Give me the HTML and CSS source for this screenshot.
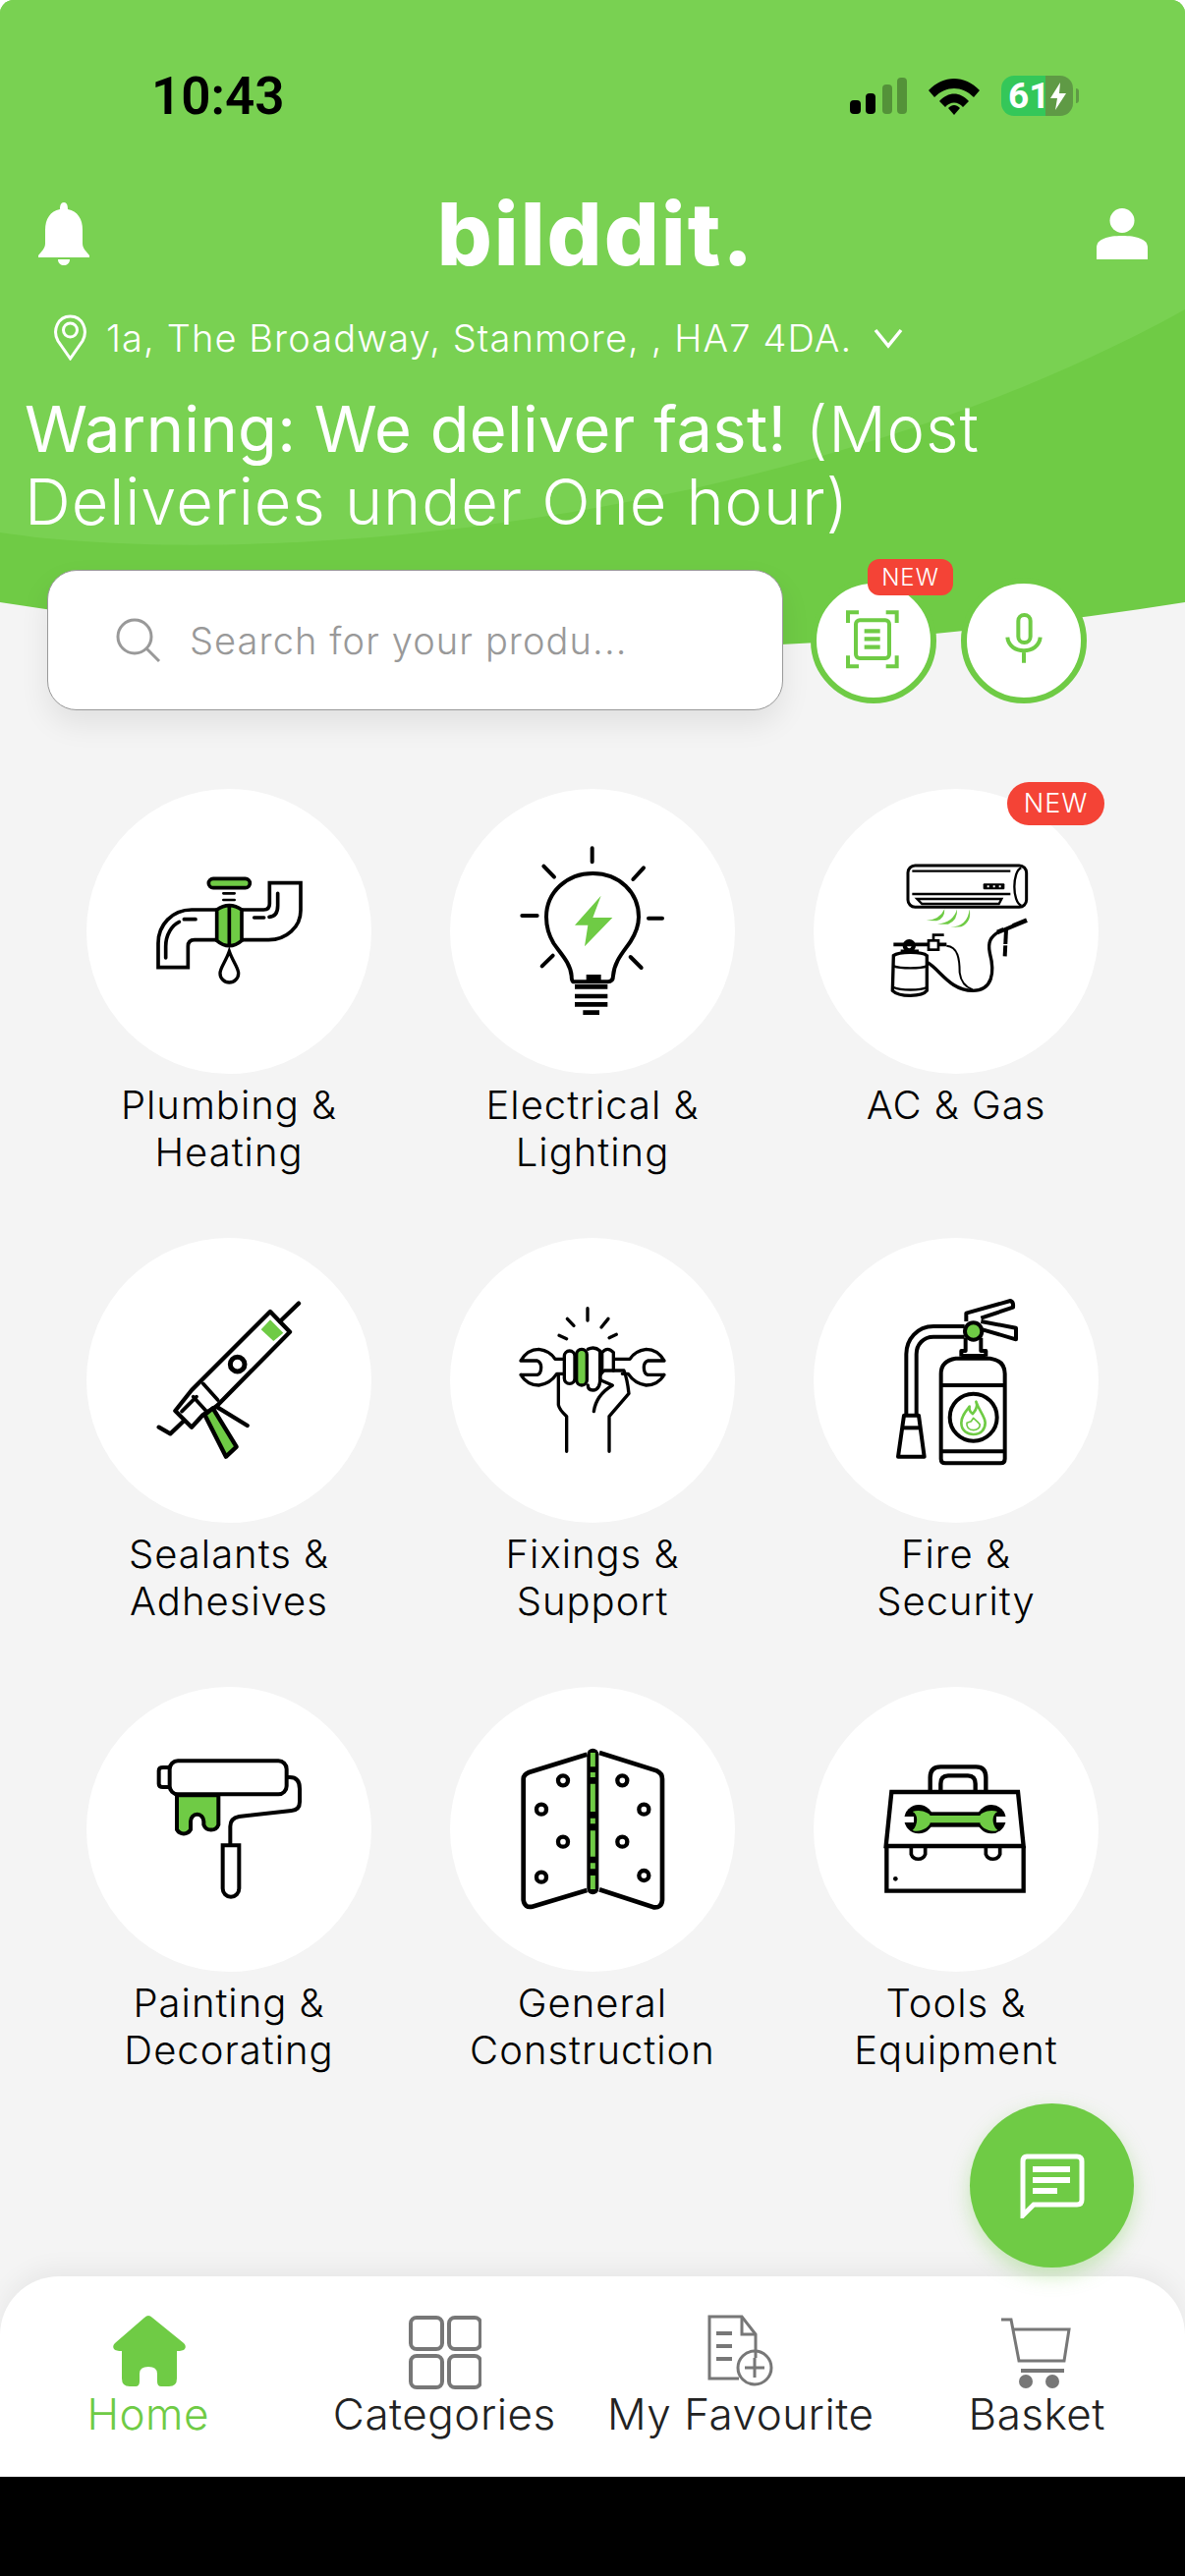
FILE: index.html
```html
<!DOCTYPE html>
<html lang="en">
<head>
  <meta charset="UTF-8">
  <title>bilddit.</title>
  <link rel="stylesheet" href="styles.css">
</head>
<body>
  <div class="screen">
    <svg class="hero-bg" viewBox="0 0 1206 720" width="1206" height="720">
      <path d="M0 0H1206V613Q603 709 0 613Z" fill="#6fcb45"/>
      <path d="M0 0H1206V315C800 540 250 580 0 542Z" fill="#79d152"/>
    </svg>

    <div class="status">
      <span class="time">10:43</span>
      <div class="status-icons">
        <svg width="58" height="37" viewBox="0 0 58 37">
          <rect x="0" y="23" width="11" height="14" rx="4"/>
          <rect x="16" y="16" width="10" height="21" rx="4"/>
          <rect class="dim" x="33" y="7" width="10" height="30" rx="4"/>
          <rect class="dim" x="48" y="0" width="10" height="37" rx="4"/>
        </svg>
        <svg width="52" height="38" viewBox="0 0 52 38">
          <path d="M0 13C15-3 37-3 52 13L46 20C34 8 18 8 6 20Z"/>
          <path d="M11 24C20 14 32 14 41 24L35 30C30 24 22 24 17 30Z"/>
          <path d="M20 31C24 27 28 27 32 31L26 38Z"/>
        </svg>
        <div class="battery">
          <span class="battery-num">61</span>
          <svg class="battery-bolt" width="16" height="28" viewBox="0 0 16 28"><path d="M10 0L0 16H7L5 28L16 11H9Z" fill="#fff"/></svg>
          <span class="battery-nub"></span>
        </div>
      </div>
    </div>

    <div class="appbar">
      <svg width="52" height="64" viewBox="0 0 52 64"><path d="M26 0C23 0 22 3 22 7C12 9 7 17 7 28V42C7 47 3 50 0 54V56H52V54C49 50 45 47 45 42V28C45 17 40 9 30 7C30 3 29 0 26 0ZM20 58H32C32 62 29 64 26 64C23 64 20 62 20 58Z" fill="#fff"/></svg>
      <span class="logo">bilddit.</span>
      <svg width="52" height="52" viewBox="0 0 52 52"><ellipse cx="26" cy="12.5" rx="12.5" ry="12.5" fill="#fff"/><path d="M0 52V40C0 31 12 28 26 28C40 28 52 31 52 40V52Z" fill="#fff"/></svg>
    </div>

    <div class="address">
      <svg width="35" height="47" viewBox="0 0 35 47" fill="none" stroke="#fff" stroke-width="3"><path d="M17.5 45L5 27C-1 16 5 2 17.5 2C30 2 36 16 30 27Z"/><circle cx="17.5" cy="16" r="7"/></svg>
      <span class="address-text">1a, The Broadway, Stanmore, , HA7 4DA.</span>
      <svg width="30" height="22" viewBox="0 0 30 22" fill="none" stroke="#fff" stroke-width="3.5"><path d="M2 3L15 19L28 3"/></svg>
    </div>

    <p class="warning"><b>Warning: We deliver fast!</b> (Most Deliveries under One hour)</p>

    <div class="search-row">
      <div class="search">
        <svg width="46" height="46" viewBox="0 0 46 46" fill="none" stroke="#999" stroke-width="3"><circle cx="19" cy="19" r="17"/><path d="M31 31L44 44"/></svg>
        <span class="placeholder">Search for your produ...</span>
      </div>
      <div class="round-btn scan">
        <span class="badge badge-small">NEW</span>
        <svg width="116" height="116" viewBox="3 72 348 348" fill="none" stroke="#6fcb45" stroke-width="12">
          <rect x="123" y="184" width="102" height="116" rx="12"/>
          <path d="M132 160H99V192M215 160H248V192M99 292V325H132M248 292V325H215"/>
          <path d="M149 217H197M149 241H197M149 266H197" stroke-width="13"/>
        </svg>
      </div>
      <div class="round-btn">
        <svg width="116" height="116" viewBox="462 72 348 348" fill="none" stroke="#6fcb45" stroke-width="12">
          <rect x="619" y="168" width="37" height="84" rx="18"/>
          <path d="M586 236C590 290 682 290 686 236M636 282V314"/>
        </svg>
      </div>
    </div>

    <div class="grid">
      <div class="cat">
        <div class="circle">
          <svg width="290" height="290" viewBox="-36 -51 870 870" fill="none" stroke="#000" stroke-width="11">
            <rect x="337" y="223" width="126" height="28" rx="14" fill="#6fcb45"/>
            <path d="M382 268H416M382 288H416" stroke-width="8" stroke-linecap="round"/>
            <path d="M365 318H285C225 318 183 365 183 420V494H274V430Q274 410 294 410H365"/>
            <path d="M435 318H505Q523 318 523 300V236H618V320C618 370 575 410 520 410H435"/>
            <path d="M206 465V430C206 395 225 365 247 355M262 347H297M548 268V305Q548 338 522 340M476 342H506" stroke-linecap="round"/>
            <path d="M400 305C380 305 362 318 362 318V412C362 412 380 428 400 428C420 428 438 412 438 412V318C438 318 420 305 400 305Z" fill="#6fcb45"/>
            <path d="M400 305V428"/>
            <path d="M400 445C390 475 372 495 372 512A28 28 0 0 0 428 512C428 495 410 475 400 445Z" stroke-width="10"/>
          </svg>
        </div>
        <span class="cat-label">Plumbing &amp;<br>Heating</span>
      </div>
      <div class="cat">
        <div class="circle">
          <svg width="290" height="290" viewBox="-426 -51 870 870" fill="none" stroke="#000" stroke-width="12" stroke-linecap="round">
            <path d="M-50 538Q-55 535-55 520C-58 480-90 450-110 420C-125 395-132 370-132 340C-132 265-70 207 10 207C90 207 150 265 150 340C150 370 138 395 125 415C105 445 75 475 72 520Q72 538 55 538Z"/>
            <rect x="-10" y="516" width="45" height="20" fill="#000" stroke="none"/>
            <path d="M35 275L-45 365H-5L-15 430L70 342H10Z" fill="#6fcb45" stroke="none"/>
            <path d="M8 130V172M133 225L165 190M180 344H222M125 462L158 495M-206 336H-160M-140 185L-108 218M-145 490L-112 458"/>
            <path d="M-45 553H55M-45 582H55M-45 607H55M-20 632H30" stroke-linecap="butt" stroke-width="14"/>
          </svg>
        </div>
        <span class="cat-label">Electrical &amp;<br>Lighting</span>
      </div>
      <div class="cat">
        <span class="badge badge-big">NEW</span>
        <div class="circle">
          <svg width="290" height="290" viewBox="684 -51 870 870" fill="none" stroke="#000" stroke-width="9">
            <rect x="972" y="183" width="362" height="127" rx="22"/>
            <path d="M985 200H1285M985 270H1285M1000 285H1258L1250 300H1015Z M1318 190C1290 200 1290 295 1318 305" stroke-width="7"/>
            <rect x="1202" y="238" width="65" height="18" rx="3" fill="#000" stroke="none"/>
            <path d="M1214 247H1220M1232 247H1238M1250 247H1256" stroke="#fff" stroke-width="6"/>
            <path d="M1028 351Q1070 348 1084 315Q1085 345 1060 352ZM1062 362Q1110 358 1122 316Q1125 350 1095 362ZM1102 372Q1155 368 1160 316Q1168 355 1135 370Z" fill="#6fcb45" stroke="none"/>
            <path d="M928 458C945 445 1015 445 1030 458V565C1015 585 945 585 925 565Z" stroke-width="10"/>
            <path d="M928 490C950 498 1010 498 1030 490M928 555C950 565 1010 565 1030 555" stroke-width="7"/>
            <circle cx="976" cy="428" r="20" fill="#000" stroke="none"/>
            <circle cx="976" cy="430" r="6" fill="#fff" stroke="none"/>
            <path d="M928 424H1090M950 445H1005" stroke-width="11"/>
            <rect x="1035" y="412" width="30" height="28" fill="#fff" stroke-width="8"/>
            <path d="M1050 412V395H1082" stroke-width="8"/>
            <path d="M1030 478C1070 500 1100 565 1170 565C1230 565 1238 510 1222 450C1215 415 1225 400 1250 385" stroke-width="10"/>
            <path d="M1090 428C1125 430 1130 470 1130 510Q1135 550 1170 562" stroke-width="6"/>
            <path d="M1245 387L1335 350" stroke-width="14"/>
            <path d="M1262 372L1290 360" stroke="#fff" stroke-width="5"/>
            <path d="M1272 378L1268 460" stroke-width="12"/>
            <path d="M1262 425H1282" stroke="#fff" stroke-width="4"/>
          </svg>
        </div>
        <span class="cat-label">AC &amp; Gas</span>
      </div>
      <div class="cat">
        <div class="circle">
          <svg width="290" height="290" viewBox="-36 -90 870 870" fill="none" stroke="#000" stroke-width="13" stroke-linejoin="round" stroke-linecap="round">
            <path d="M555 165L612 110M262 468L220 508L185 488M360 425L455 483"/>
            <path d="M525 135L585 197L360 425L320 450L285 488L235 438L285 375Z"/>
            <path d="M525 160L565 200L535 225L497 190Z" fill="#6fcb45" stroke="none"/>
            <circle cx="425" cy="296" r="22" stroke-width="15"/>
            <path d="M320 355L365 405M290 395L335 445M255 440L300 395" stroke-width="11"/>
            <path d="M325 450L390 578L422 548L350 430Z" fill="#6fcb45"/>
          </svg>
        </div>
        <span class="cat-label">Sealants &amp;<br>Adhesives</span>
      </div>
      <div class="cat">
        <div class="circle">
          <svg width="290" height="290" viewBox="-156 -180 870 870" fill="none" stroke="#000" stroke-width="10" stroke-linecap="round" stroke-linejoin="round">
            <path d="M264 35V72M202 67L222 88M177 118L200 128M327 67L306 93M352 115L330 125"/>
            <path d="M60 195Q80 160 115 160Q150 165 165 190H190M60 195H110Q122 200 122 215Q122 235 110 238H60M60 238Q80 270 115 270Q150 265 170 235H190"/>
            <path d="M498 195Q478 160 443 160Q408 165 393 190H345M498 195H448Q436 200 436 215Q436 235 448 238H498M498 238Q478 270 443 270Q408 265 388 235H370"/>
            <rect x="193" y="165" width="32" height="100" rx="16"/>
            <rect x="230" y="160" width="32" height="110" rx="16" fill="#6fcb45"/>
            <path d="M265 160Q285 150 302 165V240Q305 285 280 285Q265 285 265 270"/>
            <path d="M308 225V170Q325 150 343 170V225"/>
            <path d="M175 240V330Q178 345 200 365V472M330 472V365L390 295Q385 250 375 225H315Q295 240 305 255L340 270Q290 300 283 350"/>
          </svg>
        </div>
        <span class="cat-label">Fixings &amp;<br>Support</span>
      </div>
      <div class="cat">
        <div class="circle">
          <svg width="290" height="290" viewBox="-66 -90 870 870" fill="none" stroke="#000" stroke-width="12" stroke-linejoin="round">
            <path d="M395 180H300C250 180 217 220 217 265V450M395 212H300C270 212 248 235 248 265V450"/>
            <path d="M210 452H255L272 578H192Z"/>
            <path d="M205 490H262"/>
            <path d="M368 278H473Q518 285 518 325V585Q518 598 505 598H336Q323 598 323 585V325Q323 285 368 278Z"/>
            <path d="M325 360H515M325 562H515"/>
            <circle cx="422" cy="458" r="72"/>
            <path d="M430 410C438 428 425 440 420 447C412 442 408 435 410 425C398 440 385 455 385 475C385 500 405 510 422 510C445 510 458 495 458 475C458 455 440 440 430 410Z" stroke="#6fcb45" stroke-width="8"/>
            <path d="M422 497C408 497 400 487 402 475L415 470L422 460L435 472L442 480C442 490 433 497 422 497Z" stroke="#6fcb45" stroke-width="5"/>
            <path d="M385 272V255H398V215M460 272V255H445V215M385 270H460"/>
            <path d="M400 165V140L535 102Q545 105 543 122L445 155M445 165L552 185V220L450 190"/>
            <circle cx="422" cy="195" r="26" fill="#6fcb45"/>
          </svg>
        </div>
        <span class="cat-label">Fire &amp;<br>Security</span>
      </div>
      <div class="cat">
        <div class="circle">
          <svg width="290" height="290" viewBox="-36 -126 870 870" fill="none" stroke="#000" stroke-width="12">
            <rect x="218" y="100" width="357" height="102" rx="25"/>
            <path d="M218 120H198Q185 120 185 130V170Q185 180 198 180H218"/>
            <path d="M575 150H585Q615 150 615 185V225Q615 250 590 252L430 270Q403 275 403 300V355"/>
            <path d="M380 358H430V490A25 25 0 0 1 380 490Z"/>
            <path d="M240 205V310A24 24 0 0 0 282 310V285A20 22 0 0 1 322 285V295A24 24 0 0 0 367 295V205Z" fill="#6fcb45"/>
          </svg>
        </div>
        <span class="cat-label">Painting &amp;<br>Decorating</span>
      </div>
      <div class="cat">
        <div class="circle">
          <svg width="290" height="290" viewBox="-156 -156 870 870" fill="none" stroke="#000" stroke-width="14">
            <path d="M262 50L85 105Q68 112 68 125V495Q72 520 95 515L262 465"/>
            <path d="M300 45L475 100Q492 108 492 125V495Q490 520 465 517L300 463"/>
            <rect x="262" y="32" width="36" height="446" rx="18" fill="#000" stroke="none"/>
            <path d="M280 45V88M280 105V120M280 140V225M280 245V262M280 283V362M280 382V400M280 420V462" stroke="#6fcb45" stroke-width="15"/>
            <g stroke-width="13" fill="#fff">
              <circle cx="189" cy="130" r="15"/><circle cx="123" cy="218" r="15"/><circle cx="189" cy="317" r="15"/><circle cx="123" cy="425" r="15"/>
              <circle cx="370" cy="130" r="15"/><circle cx="436" cy="218" r="15"/><circle cx="370" cy="317" r="15"/><circle cx="436" cy="420" r="15"/>
            </g>
          </svg>
        </div>
        <span class="cat-label">General<br>Construction</span>
      </div>
      <div class="cat">
        <div class="circle">
          <svg width="290" height="290" viewBox="-66 -126 870 870" fill="none" stroke="#000" stroke-width="13">
            <path d="M290 195V150Q290 118 322 118H430Q460 118 460 150V195M322 195V170Q322 145 345 145H405Q428 145 428 170V195"/>
            <path d="M172 195H558L575 360H155Z"/>
            <path d="M157 360V497H575V360"/>
            <path d="M232 365V385A23 23 0 0 0 275 385V365M460 365V385A23 23 0 0 0 503 385V365" stroke-width="11"/>
            <circle cx="184" cy="460" r="7" fill="#000" stroke="none"/>
            <circle cx="255" cy="278" r="44" fill="#000" stroke="none"/>
            <circle cx="477" cy="278" r="44" fill="#000" stroke="none"/>
            <rect x="255" y="256" width="222" height="46" fill="#000" stroke="none"/>
            <path d="M236 255C260 245 290 260 290 267H442C442 260 470 245 496 255C478 262 476 295 496 312C470 322 442 300 442 289H290C290 300 260 322 236 312C254 295 254 262 236 255Z" fill="#6fcb45" stroke="none"/>
            <path d="M205 270H240V288H205ZM527 270H492V288H527Z" fill="#fff" stroke="none"/>
          </svg>
        </div>
        <span class="cat-label">Tools &amp;<br>Equipment</span>
      </div>
    </div>

    <div class="fab">
      <svg width="66" height="66" viewBox="0 0 66 66" fill="none" stroke="#fff" stroke-width="5">
        <path d="M7 3H58Q63 3 63 8V47Q63 52 58 52H14L3 63V8Q3 3 7 3Z"/>
        <path d="M13 16H51M13 27H51M13 38H38" stroke-width="6"/>
      </svg>
    </div>

    <nav class="nav">
      <div class="nav-item active">
        <svg width="80" height="76" viewBox="0 0 80 76"><path d="M40 1Q42 1 44 3L76 29Q79 32 77 35Q75 37 69 37V65Q69 73 61 73H53Q49 73 49 68V60Q49 53 40 53Q31 53 31 60V68Q31 73 27 73H21Q13 73 13 65V37Q7 37 5 35Q3 32 6 29L36 3Q38 1 40 1Z" fill="#6fcb45"/></svg>
        <span>Home</span>
      </div>
      <div class="nav-item">
        <svg width="76" height="76" viewBox="0 0 76 76" fill="none" stroke="#777" stroke-width="4">
          <rect x="4" y="3" width="32" height="32" rx="6"/><rect x="43" y="3" width="32" height="32" rx="6"/>
          <rect x="4" y="42" width="32" height="32" rx="6"/><rect x="43" y="42" width="32" height="32" rx="6"/>
        </svg>
        <span>Categories</span>
      </div>
      <div class="nav-item">
        <svg width="70" height="76" viewBox="0 0 70 76" fill="none" stroke="#777" stroke-width="3">
          <path d="M50 44V20L36 2H3V65H33"/>
          <path d="M36 2V20H50"/>
          <path d="M10 19H26M10 32H26M10 45H26" stroke-width="4"/>
          <circle cx="49" cy="54" r="17"/>
          <path d="M49 44V64M39 54H59"/>
        </svg>
        <span>My Favourite</span>
      </div>
      <div class="nav-item">
        <svg width="76" height="76" viewBox="0 0 76 76" fill="none" stroke="#777" stroke-width="3">
          <path d="M2 5H12L20 47H66L71 15H14"/>
          <path d="M22 57H66" stroke-width="4"/>
          <circle cx="27" cy="68" r="7" fill="#777" stroke="none"/>
          <circle cx="54" cy="68" r="7" fill="#777" stroke="none"/>
        </svg>
        <span>Basket</span>
      </div>
    </nav>
    <div class="home-bar"></div>
  </div>
</body>
</html>
```

FILE: styles.css
```css
* {
  box-sizing: border-box;
}
body {
  margin: 0;
  background: #fff;
  font-family: Inter, "Noto Sans", sans-serif;
}
.screen {
  position: relative;
  display: flex;
  flex-direction: column;
  width: 1206px;
  height: 2622px;
  overflow: hidden;
  background: #f4f4f4;
  border-radius: 14px 14px 0 0;
}
.hero-bg {
  position: absolute;
  top: 0;
  left: 0;
}
.status, .appbar, .address, .warning, .search-row, .grid {
  position: relative;
}
.status {
  display: flex;
  justify-content: space-between;
  align-items: center;
  height: 41px;
  margin-top: 77px;
  padding: 0 114px 0 154px;
}
.time {
  font-family: Roboto, sans-serif;
  font-size: 53px;
  font-weight: 600;
  color: #000;
}
.status-icons {
  display: flex;
  align-items: center;
  gap: 22px;
}
.status-icons .dim {
  opacity: .3;
}
.battery {
  position: relative;
  display: flex;
  align-items: center;
  width: 73px;
  height: 41px;
  padding-left: 7px;
  border-radius: 13px;
  background: linear-gradient(90deg, #34c759 62%, #5f9a45 62%);
}
.battery-num {
  font-family: Roboto, sans-serif;
  font-size: 37px;
  font-weight: 700;
  color: #fff;
}
.battery-bolt {
  position: absolute;
  top: 7px;
  left: 50px;
}
.battery-nub {
  position: absolute;
  top: 13px;
  right: -6px;
  width: 3px;
  height: 15px;
  border-radius: 0 3px 3px 0;
  background: #5f9a45;
}
.appbar {
  display: flex;
  justify-content: space-between;
  align-items: center;
  height: 68px;
  margin-top: 86px;
  padding: 0 38px 0 39px;
}
.logo {
  margin-left: 6px;
  font-size: 88px;
  font-weight: 800;
  line-height: 68px;
  letter-spacing: 2px;
  color: #fff;
}
.address {
  display: flex;
  align-items: center;
  height: 47px;
  margin-top: 48px;
  padding-left: 54px;
  color: #fff;
}
.address-text {
  margin: 0 22px 0 19px;
  font-size: 38px;
  font-weight: 300;
  letter-spacing: 1.1px;
}
.warning {
  margin: 33px 0 0;
  padding: 0 25px;
  font-size: 65px;
  font-weight: 300;
  line-height: 74px;
  letter-spacing: .9px;
  color: #fff;
}
.warning b {
  font-weight: 400;
  letter-spacing: .3px;
}
.search-row {
  display: flex;
  align-items: flex-start;
  gap: 25px;
  margin-top: 32px;
  padding-left: 48px;
}
.search {
  display: flex;
  align-items: center;
  gap: 29px;
  width: 749px;
  height: 143px;
  padding-left: 69px;
  background: #fff;
  border: 1px solid #999;
  border-radius: 30px;
  box-shadow: 0 14px 30px rgba(0, 0, 0, .08);
}
.placeholder {
  font-size: 38px;
  font-weight: 300;
  letter-spacing: 1.1px;
  color: #999;
}
.round-btn {
  position: relative;
  width: 128px;
  height: 128px;
  margin-top: 8px;
  background: #fff;
  border: 6px solid #6fcb45;
  border-radius: 50%;
}
.scan {
  margin-left: 3px;
}
.round-btn svg {
  display: block;
}
.badge {
  position: absolute;
  background: #f44336;
  color: #fff;
  text-align: center;
}
.badge-small {
  top: -25px;
  left: 52px;
  width: 87px;
  height: 37px;
  border-radius: 12px;
  font-size: 24px;
  font-weight: 300;
  line-height: 37px;
  letter-spacing: 1px;
}
.badge-big {
  top: -7px;
  right: 34px;
  width: 99px;
  height: 44px;
  border-radius: 22px;
  font-size: 27px;
  font-weight: 300;
  line-height: 44px;
  letter-spacing: 1px;
}
.grid {
  display: grid;
  grid-template-columns: repeat(3, 370px);
  grid-auto-rows: 457px;
  margin-top: 80px;
  padding-left: 48px;
}
.cat {
  position: relative;
  display: flex;
  flex-direction: column;
  align-items: center;
}
.circle {
  width: 290px;
  height: 290px;
  background: #fff;
  border-radius: 50%;
}
.circle svg {
  display: block;
}
.cat-label {
  margin-top: 8px;
  font-size: 40px;
  font-weight: 300;
  line-height: 48px;
  letter-spacing: 1px;
  text-align: center;
  color: #000;
}
.fab {
  position: absolute;
  top: 2141px;
  left: 987px;
  display: flex;
  justify-content: center;
  align-items: center;
  width: 167px;
  height: 167px;
  background: #6fcb45;
  border-radius: 50%;
  box-shadow: 0 8px 20px rgba(111, 203, 69, .35);
}
.nav {
  display: grid;
  grid-template-columns: repeat(4, 1fr);
  height: 204px;
  margin-top: auto;
  padding-top: 39px;
  background: #fff;
  border-radius: 60px 60px 0 0;
  box-shadow: 0 -8px 24px rgba(0, 0, 0, .05);
}
.nav-item {
  display: flex;
  flex-direction: column;
  align-items: center;
  font-size: 44px;
  font-weight: 300;
  line-height: 50px;
  letter-spacing: .5px;
  color: #222;
}
.nav-item svg {
  display: block;
}
.nav-item.active {
  color: #6fcb45;
}
.home-bar {
  height: 101px;
  background: #000;
}
```
